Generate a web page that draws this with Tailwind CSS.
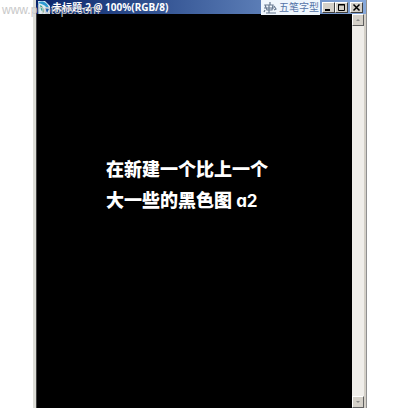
<!DOCTYPE html>
<html lang="zh-CN">
<head>
    <meta charset="UTF-8">
    <meta name="viewport" content="width=device-width, initial-scale=1.0">
    <title>未标题-2</title>
    <script src="https://cdn.jsdelivr.net/npm/@tailwindcss/browser@4"></script>
</head>
<body class="bg-white overflow-hidden font-['Liberation_Sans','Noto_Sans_CJK_SC',sans-serif]">
<div class="relative h-screen pl-[33px] pr-[45px]">
    <!-- Document window -->
    <div class="flex flex-col h-full border-l-3 border-r border-l-[#dcdcd6] border-r-[#909090]">
        <!-- Title bar -->
        <header class="flex items-center h-[14px] shrink-0 bg-linear-to-r from-[#0a246a] to-[#86a8da] text-white">
            <svg class="w-4 h-[14px] shrink-0" viewBox="0 0 16 14">
                <path d="M2 1h7l5 5v8H3z" fill="#dcebf5"/>
                <path d="M2 3c4-3 9-1 11 5l-3-1c-1-2-4-3-8-4z" fill="#2c9ad0"/>
                <path d="M4 5c3 1 4 4 4 8L5 10z" fill="#3aa78a"/>
                <path d="M9 8l4 1-2 4z" fill="#1c5fa8"/>
            </svg>
            <h1 class="flex-1 whitespace-nowrap text-[10px] leading-[14px] font-bold font-['Noto_Sans','Noto_Sans_CJK_SC',sans-serif]">未标题-2 @ 100%(RGB/8)</h1>
            <!-- Input method -->
            <div class="flex items-center self-start h-[15px] w-[59px] px-[2px] gap-[2px] mr-[2px] z-10 bg-[#f0f7fd] text-[#5574a8]">
                <svg class="w-[14px] h-[14px] shrink-0" viewBox="0 0 14 14" fill="none" stroke="#66788f" stroke-width="1.2">
                    <path d="M7 1v3M2 4h8l-1 5H4zM1 7h10M6 4v8M3 12h10M11 5l2 3-2 1M2 9l-1 2"/>
                </svg>
                <span class="text-[10px] leading-[14px] whitespace-nowrap">五笔字型</span>
            </div>
            <div class="flex items-center h-3 pr-[3px]">
                <button aria-label="最小化" class="w-[13px] h-[11px] bg-[#d4d0c8] border border-t-white border-l-white border-r-[#404040] border-b-[#404040]">
                    <svg class="w-full h-full" viewBox="0 0 11 9"><path d="M2 7h5" stroke="#000" stroke-width="2"/></svg>
                </button>
                <button aria-label="最大化" class="w-[13px] h-[11px] bg-[#d4d0c8] border border-t-white border-l-white border-r-[#404040] border-b-[#404040]">
                    <svg class="w-full h-full" viewBox="0 0 11 9" fill="none" stroke="#000"><path d="M2.500 1.500h6v6h-6zM2 2h7"/></svg>
                </button>
                <button aria-label="关闭" class="w-[13px] h-[11px] ml-[2px] bg-[#d4d0c8] border border-t-white border-l-white border-r-[#404040] border-b-[#404040]">
                    <svg class="w-full h-full" viewBox="0 0 11 9"><path d="M2.500 1.500l6 6M8.500 1.500l-6 6" stroke="#000" stroke-width="1.500"/></svg>
                </button>
            </div>
        </header>
        <div class="flex flex-1 min-h-0 border-l border-[#404040]">
            <!-- Canvas -->
            <main class="flex-1 bg-black text-white pl-[69px] pt-[139px] text-lg leading-[31px] font-black font-['Noto_Sans_CJK_SC',sans-serif]">
                <p>在新建一个比上一个</p>
                <p>大一些的黑色图 <span class="font-['Inter','Noto_Sans_CJK_SC',sans-serif] font-bold text-[17px] [font-feature-settings:'cv11']">a2</span></p>
            </main>
            <!-- Scroll bar -->
            <div class="flex flex-col justify-between w-[14px] bg-[#f0eeea] border-r-2 border-[#d4d0c8]">
                <button aria-label="向上滚动" class="w-3 h-3 bg-[#d4d0c8] border border-t-white border-l-white border-r-[#606060] border-b-[#606060]">
                    <svg class="w-full h-full" viewBox="0 0 10 10"><path d="M3 6l2-2 2 2z" fill="#888"/></svg>
                </button>
                <button aria-label="向下滚动" class="w-3 h-3 bg-[#d4d0c8] border border-t-white border-l-white border-r-[#606060] border-b-[#606060]">
                    <svg class="w-full h-full" viewBox="0 0 10 10"><path d="M3 4l2 2 2-2z" fill="#888"/></svg>
                </button>
            </div>
        </div>
    </div>
    <!-- Watermark -->
    <span class="absolute left-[2px] top-[2px] z-20 text-xs leading-4 text-[#c8c8c8]">www.photops.com</span>
</div>
</body>
</html>
